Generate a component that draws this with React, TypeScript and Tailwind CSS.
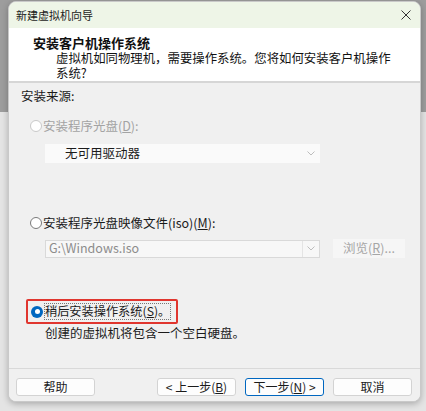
import React from 'react';

const font = "font-['Segoe_UI','Noto_Sans_CJK_SC','Noto_Sans',sans-serif]";

const Chevron = ({ className = '' }: { className?: string }) => (
  <svg className={className} width="8" height="5" viewBox="0 0 8 5" fill="none">
    <path d="M0.5 0.5L4 4L7.5 0.5" stroke="currentColor" strokeWidth="0.9" />
  </svg>
);

const Radio = ({ checked = false, disabled = false }: { checked?: boolean; disabled?: boolean }) =>
  checked ? (
    <span className="flex h-[12px] w-[12px] shrink-0 items-center justify-center rounded-full bg-[#0067c0]">
      <span className="h-[5px] w-[5px] rounded-full bg-white" />
    </span>
  ) : (
    <span
      className={`h-[12px] w-[12px] shrink-0 rounded-full border bg-white ${
        disabled ? 'border-[#c9c9c9]' : 'border-[#7a7a7a]'
      }`}
    />
  );

const Btn = ({ children, focus = false }: { children: React.ReactNode; focus?: boolean }) => (
  <div
    className={`flex h-[18px] w-[79px] items-center justify-center whitespace-nowrap rounded-[3px] border bg-[#fdfdfd] text-[12px] text-[#1b1b1b] ${
      focus ? 'border-[#0067c0]' : 'border-[#d3d3d3]'
    }`}
  >
    {children}
  </div>
);

export default function App() {
  return (
    <div
      className={`h-[411px] w-[426px] overflow-hidden bg-[linear-gradient(to_bottom,#9d9d9d_0,#9d9d9d_112px,#e4e4e4_112px)] pl-2 pt-px ${font}`}
    >
      <div className="flex h-[401px] w-[413px] flex-col overflow-hidden rounded-lg border border-[#c9c9c9] bg-[#f0f0f0] shadow-[0_2px_6px_rgba(0,0,0,0.25)]">
        {/* title bar */}
        <div className="flex h-[26px] shrink-0 items-center justify-between bg-[#eef5e7] pl-[7px] pr-[9px] text-[11px] text-[#1b1b1b]">
          <span>新建虚拟机向导</span>
          <svg width="10" height="10" viewBox="0 0 10 10">
            <path d="M0.5 0.5L9.5 9.5M9.5 0.5L0.5 9.5" stroke="#333" strokeWidth="1" />
          </svg>
        </div>

        {/* header */}
        <div className="h-[53px] shrink-0 bg-white pl-[24px] pt-[6px] text-[#111]">
          <div className="text-[13px] font-bold leading-[17px]">安装客户机操作系统</div>
          <div className="pl-[23px] text-[12.4px] leading-[15px]">
            虚拟机如同物理机，需要操作系统。您将如何安装客户机操作
            <br />
            系统?
          </div>
        </div>
        <div className="h-[2px] shrink-0 bg-[#d6d6d6]" />

        {/* body */}
        <div className="flex flex-1 flex-col whitespace-nowrap pl-3 pt-[3px] text-[12.5px] text-[#1b1b1b]">
          <div className="leading-[20px]">安装来源:</div>

          <div className="ml-[9px] mt-[10px] flex h-[20px] items-center gap-[1px] text-[#a3a3a3]">
            <Radio disabled />
            <span>
              安装程序光盘(<span className="underline">D</span>):
            </span>
          </div>
          <div className="ml-[24px] mt-[8px] flex h-[19px] w-[275px] items-center justify-between bg-[#fafafa] pl-[20px] pr-[5px]">
            <span className="text-[#1b1b1b]">无可用驱动器</span>
            <Chevron className="text-[#b5b5b5]" />
          </div>

          <div className="ml-[9px] mt-[50px] flex h-[20px] items-center gap-[1px]">
            <Radio />
            <span>
              安装程序光盘映像文件(iso)(<span className="underline">M</span>):
            </span>
          </div>
          <div className="ml-[24px] mt-[6px] flex items-center gap-[13px]">
            <div className="flex h-[18px] w-[275px] items-center justify-between border border-[#d9d9d9] bg-[#f7f7f7] pl-[3px]">
              <span className="text-[#8c8c8c]">G:\Windows.iso</span>
              <div className="flex h-full w-[17px] items-center justify-center border-l border-[#e4e4e4]">
                <Chevron className="text-[#b5b5b5]" />
              </div>
            </div>
            <div className="flex h-[19px] w-[72px] items-center justify-center bg-[#f6f6f6] text-[#a6a6a6]">
              浏览(<span className="underline">R</span>)...
            </div>
          </div>

          <div className="ml-[5px] mt-[41px] flex h-[25px] w-[152px] items-center gap-[1px] rounded-[2px] border-2 border-[#e0362f] pl-[3px] text-[12.2px]">
            <Radio checked />
            <span className="border border-dotted border-[#777] leading-[15px]">
              稍后安装操作系统(<span className="underline">S</span>)。
            </span>
          </div>
          <div className="ml-[24px] leading-[18px]">创建的虚拟机将包含一个空白硬盘。</div>
        </div>

        {/* footer */}
        <div className="h-[33px] shrink-0 border-t border-[#d9d9d9] bg-[#f0f0f0] pt-[9px]">
          <div className="flex items-center pl-[7px] pr-[8px]">
            <Btn>帮助</Btn>
            <div className="ml-auto flex gap-[9px]">
              <Btn>
                &lt; 上一步(<span className="underline">B</span>)
              </Btn>
              <Btn focus>
                下一步(<span className="underline">N</span>) &gt;
              </Btn>
              <Btn>取消</Btn>
            </div>
          </div>
        </div>
      </div>
    </div>
  );
}
